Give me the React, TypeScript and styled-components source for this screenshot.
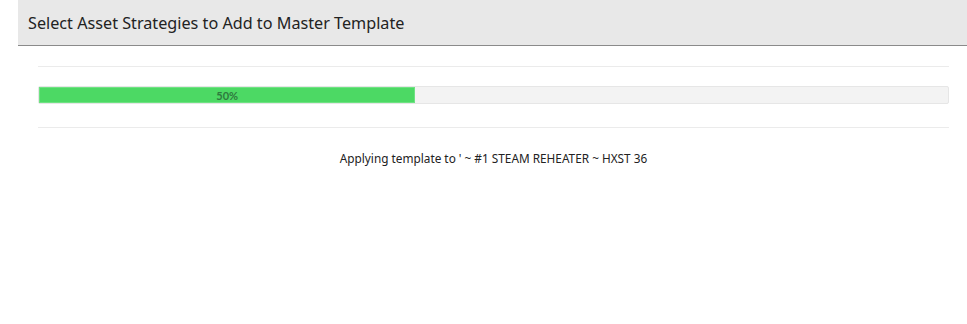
import React from 'react';
import styled, { createGlobalStyle } from 'styled-components';

const GlobalStyle = createGlobalStyle`
  html, body {
    margin: 0;
    padding: 0;
    background: #ffffff;
    font-family: "Noto Sans", "Open Sans", sans-serif;
  }
`;

const Page = styled.div`
  width: 967px;
  height: 324px;
  background: #ffffff;
  display: flex;
  flex-direction: column;
`;

const Header = styled.div`
  margin-left: 18px;
  height: 45px;
  background: #e8e8e8;
  border-bottom: 1px solid #8a8a8a;
  display: flex;
  align-items: center;
  padding-left: 10px;
`;

const Title = styled.h2`
  margin: 0;
  font-size: 16.2px;
  font-weight: 400;
  color: #222;
`;

const Body = styled.div`
  padding: 20px 18px 0 38px;
  display: flex;
  flex-direction: column;
`;

const Rule = styled.div<{ $gap: number }>`
  height: 1px;
  background: #ebebeb;
  margin-bottom: ${({ $gap }) => $gap}px;
`;

const Track = styled.div`
  height: 18px;
  box-sizing: border-box;
  background: #f3f3f3;
  border: 1px solid #e6e6e6;
  border-radius: 2px;
  display: flex;
  margin-bottom: 23px;
`;

const Fill = styled.div`
  height: 100%;
  background: #4cd964;
  box-shadow: inset 0 0 0 1px #6ee282;
  display: flex;
  align-items: center;
  justify-content: center;
  font-family: Lato, "Noto Sans", sans-serif;
  font-size: 11px;
  font-weight: 700;
  color: #2f7a3e;
`;

const Status = styled.div`
  text-align: center;
  font-size: 11.8px;
  color: #222;
  margin-top: 22px;
`;

export default function App() {
  const shown = 41.4;
  return (
    <Page>
      <GlobalStyle />
      <Header>
        <Title>Select Asset Strategies to Add to Master Template</Title>
      </Header>
      <Body>
        <Rule $gap={19} />
        <Track>
          <Fill style={{ width: `${shown}%` }}>50%</Fill>
        </Track>
        <Rule $gap={0} />
        <Status>Applying template to ' ~ #1 STEAM REHEATER ~ HXST 36</Status>
      </Body>
    </Page>
  );
}
